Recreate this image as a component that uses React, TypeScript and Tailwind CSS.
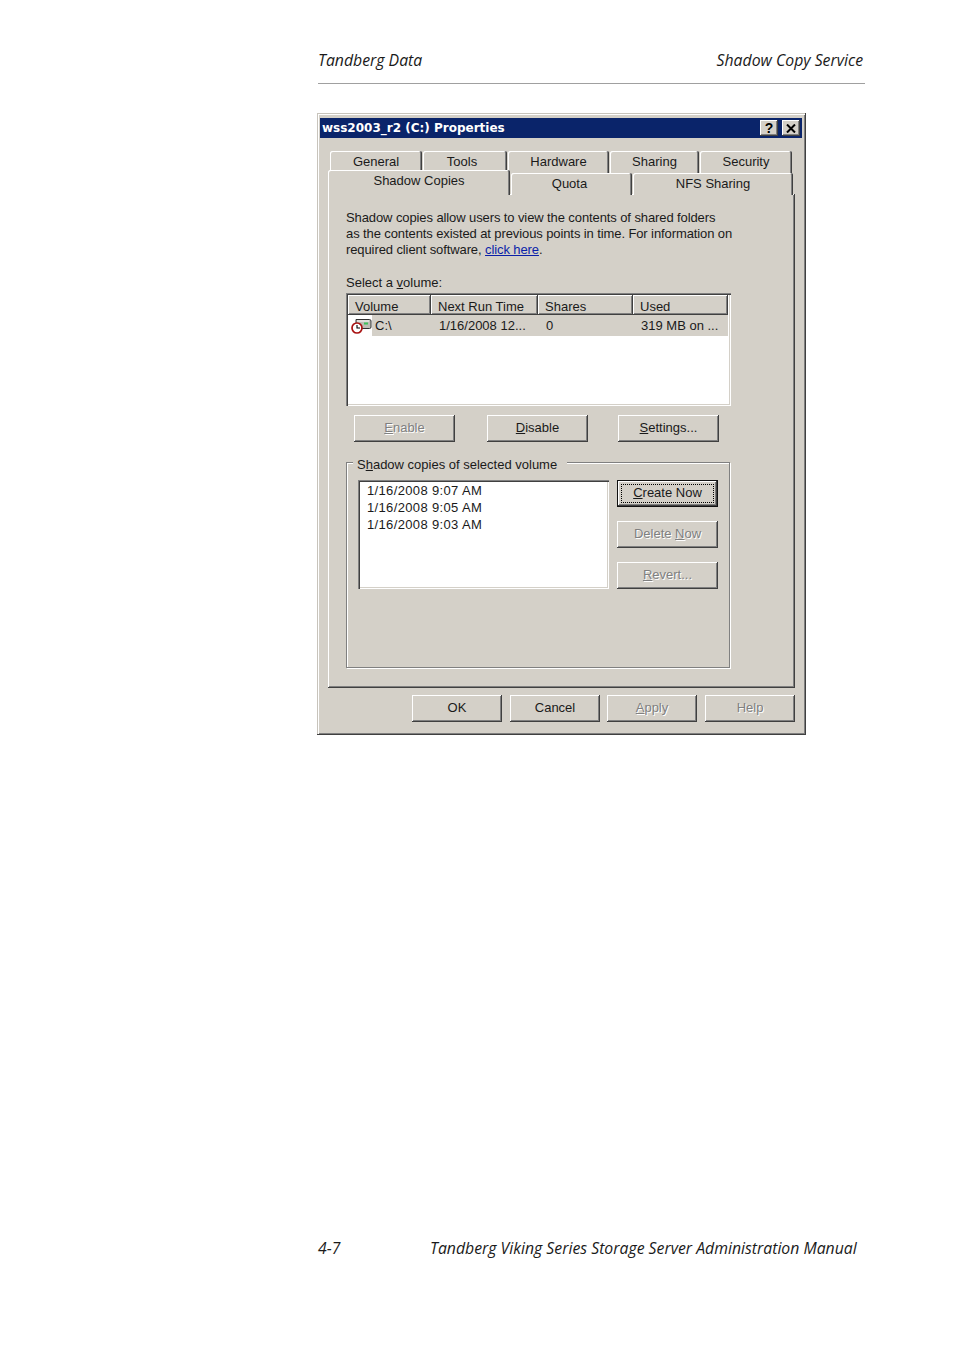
import React from 'react';

const raised =
  'shadow-[inset_-1px_-1px_#404040,inset_1px_1px_#ffffff,inset_-2px_-2px_#808080]';
const sunken =
  'shadow-[inset_1px_1px_#808080,inset_2px_2px_#404040,inset_-1px_-1px_#ffffff,inset_-2px_-2px_#d4d0c8]';
const disabledText = 'text-[#808080] [text-shadow:1px_1px_0_#ffffff]';

const DriveIcon: React.FC = () => (
  <svg width="21" height="16" viewBox="0 0 21 16" className="shrink-0">
    <path d="M5 1.5h13.5a1.5 1.5 0 0 1 1.5 1.5v6a1.5 1.5 0 0 1-1.5 1.5H5z" fill="#bdbdb5" stroke="#303030" />
    <path d="M6 2.5h12v1H6z" fill="#ffffff" />
    <rect x="13" y="4.5" width="4" height="2" fill="#3fc25a" />
    <circle cx="6" cy="10" r="5" fill="#ffffff" stroke="#a81010" strokeWidth="1.7" />
    <path d="M6 7v3h3" fill="none" stroke="#000000" strokeWidth="1.1" />
  </svg>
);

const Btn: React.FC<{
  w?: string;
  disabled?: boolean;
  children: React.ReactNode;
}> = ({ w = 'w-[101px]', disabled, children }) => (
  <div
    className={`${w} h-[27px] pb-[1px] flex items-center justify-center bg-[#d4d0c8] ${raised} ${
      disabled ? disabledText : 'text-[#1a1a1a]'
    }`}
  >
    <span>{children}</span>
  </div>
);

const Tab: React.FC<{ w: string; children: React.ReactNode }> = ({ w, children }) => (
  <div
    className={`${w} h-[22px] flex items-center justify-center rounded-t-[2px] bg-[#d4d0c8] shadow-[inset_-1px_0_#404040,inset_1px_1px_#ffffff,inset_-2px_0_#808080]`}
  >
    {children}
  </div>
);

const HeaderCell: React.FC<{ w: string; children: React.ReactNode }> = ({ w, children }) => (
  <div className={`${w} h-[20px] pl-[7px] pt-[3px] flex items-center ${raised}`}>{children}</div>
);

const App: React.FC = () => {
  return (
    <div className="w-[954px] h-[1350px] bg-white flex flex-col font-['Open_Sans',sans-serif]">
      {/* Page header */}
      <div className="ml-[318px] mr-[89px] mt-[48px] h-[36px] border-b border-[#a0a0a0] flex justify-between pr-[2px] italic text-[15.8px] leading-[24px] text-[#1a1a1a]">
        <span>Tandberg Data</span>
        <span>Shadow Copy Service</span>
      </div>

      {/* Properties dialog */}
      <div className="ml-[317px] mt-[29px] w-[489px] h-[622px] pl-[3px] pt-[5px] bg-[#d4d0c8] shadow-[inset_-1px_-1px_#404040,inset_1px_1px_#c8c4bc,inset_2px_2px_#ffffff,inset_-2px_-2px_#808080] font-['Liberation_Sans',sans-serif] text-[13px] leading-[16px] text-[#1a1a1a]">
        <div className="w-[482px] h-[20px] bg-[#0a246a] flex items-center justify-between px-[2px]">
          <span className="font-['DejaVu_Sans',sans-serif] font-bold text-[12px] text-white">
            wss2003_r2 (C:) Properties
          </span>
          <div className="flex gap-[4px]">
            <div className={`w-[18px] h-[16px] bg-[#d4d0c8] ${raised} flex items-center justify-center font-bold text-[14px] text-black`}>
              ?
            </div>
            <div className={`w-[18px] h-[16px] bg-[#d4d0c8] ${raised} flex items-center justify-center`}>
              <svg width="10" height="9" viewBox="0 0 10 9">
                <path d="M1 0.5l8 8M9 0.5l-8 8" stroke="#000" strokeWidth="2" />
              </svg>
            </div>
          </div>
        </div>

        <div className="ml-[8px] mt-[12px] w-[467px]">
          {/* Tabs */}
          <div className="flex pl-[2px] gap-[1px] pt-[1px] h-[22px]">
            <Tab w="w-[92px]">General</Tab>
            <Tab w="w-[84px] pr-[6px]">Tools</Tab>
            <Tab w="w-[101px]">Hardware</Tab>
            <Tab w="w-[89px]">Sharing</Tab>
            <Tab w="w-[92px]">Security</Tab>
          </div>
          <div className="relative z-10 -mt-[2px] -mb-[1px] h-[25px] flex items-end gap-[1px]">
            <div className="w-[182px] h-[25px] pb-[3px] flex items-center justify-center rounded-t-[2px] bg-[#d4d0c8] shadow-[inset_-1px_0_#404040,inset_1px_1px_#ffffff,inset_-2px_0_#808080]">
              Shadow Copies
            </div>
            <Tab w="w-[121px] pr-[4px]">Quota</Tab>
            <Tab w="w-[160px]">NFS Sharing</Tab>
          </div>

          {/* Tab panel */}
          <div className={`h-[494px] pl-[18px] pt-[16px] ${raised}`}>
            <p className="tracking-[-0.1px]">
              Shadow copies allow users to view the contents of shared folders
              <br />
              as the contents existed at previous points in time. For information on
              <br />
              required client software,{' '}
              <a className="text-[#0a1fa8] underline">click here</a>.
            </p>

            <p className="mt-[17px]">
              Select a <span className="underline">v</span>olume:
            </p>

            {/* Volume list */}
            <div className={`mt-[2px] w-[385px] h-[113px] bg-white p-[2px] pr-[3px] ${sunken}`}>
              <div className="flex bg-[#d4d0c8]">
                <HeaderCell w="w-[83px]">Volume</HeaderCell>
                <HeaderCell w="w-[107px]">Next Run Time</HeaderCell>
                <HeaderCell w="w-[95px]">Shares</HeaderCell>
                <HeaderCell w="w-[95px]">Used</HeaderCell>
              </div>
              <div className="flex h-[21px] items-center">
                <div className="w-[83px] h-full flex items-center pl-[3px]">
                  <DriveIcon />
                  <span className="h-full flex-1 pl-[3px] pt-[1px] flex items-center bg-[#d4d0c8]">C:\</span>
                </div>
                <div className="w-[107px] h-full pl-[8px] pt-[1px] flex items-center bg-[#d4d0c8]">1/16/2008 12...</div>
                <div className="w-[95px] h-full pl-[8px] pt-[1px] flex items-center bg-[#d4d0c8]">0</div>
                <div className="w-[95px] h-full pl-[8px] pt-[1px] flex items-center bg-[#d4d0c8]">319 MB on ...</div>
              </div>
            </div>

            <div className="mt-[9px] ml-[8px] flex">
              <Btn disabled>
                <span className="underline">E</span>nable
              </Btn>
              <div className="ml-[32px] mr-[30px]">
                <Btn>
                  <span className="underline">D</span>isable
                </Btn>
              </div>
              <Btn>
                <span className="underline">S</span>ettings...
              </Btn>
            </div>

            {/* Shadow copies group */}
            <div className="relative mt-[20px] w-[384px] h-[206px] pl-[11px] pt-[17px] border border-[#808080] shadow-[1px_1px_#ffffff,inset_1px_1px_#ffffff]">
              <div className="absolute -top-[6px] left-[6px] px-[4px] pr-[10px] bg-[#d4d0c8]">
                S<span className="underline">h</span>adow copies of selected volume
              </div>
              <div className="flex gap-[8px]">
                <div className={`w-[251px] h-[109px] bg-white pl-[9px] pt-[2px] leading-[17px] tracking-[0.35px] ${sunken}`}>
                  <div>1/16/2008 9:07 AM</div>
                  <div>1/16/2008 9:05 AM</div>
                  <div>1/16/2008 9:03 AM</div>
                </div>
                <div className="flex flex-col gap-[14px]">
                  <div className="w-[101px] h-[27px] p-[1px] bg-[#111]">
                    <div className={`relative h-full pb-[1px] flex items-center justify-center bg-[#d4d0c8] ${raised}`}>
                      <span className="absolute inset-[3px] border border-dotted border-black" />
                      <span>
                        <span className="underline">C</span>reate Now
                      </span>
                    </div>
                  </div>
                  <Btn disabled>
                    Delete <span className="underline">N</span>ow
                  </Btn>
                  <Btn disabled>
                    <span className="underline">R</span>evert...
                  </Btn>
                </div>
              </div>
            </div>
          </div>

          {/* Dialog buttons */}
          <div className="mt-[7px] flex justify-end gap-[8px]">
            <Btn w="w-[90px]">OK</Btn>
            <Btn w="w-[90px]">Cancel</Btn>
            <Btn w="w-[90px] -ml-[1px]" disabled>
              <span className="underline">A</span>pply
            </Btn>
            <Btn w="w-[90px]" disabled>
              Help
            </Btn>
          </div>
        </div>
      </div>

      {/* Page footer */}
      <div className="ml-[318px] mt-[501px] flex italic text-[15.8px] leading-[24px] text-[#1a1a1a]">
        <span className="w-[112px]">4-7</span>
        <span>Tandberg Viking Series Storage Server Administration Manual</span>
      </div>
    </div>
  );
};

export default App;
